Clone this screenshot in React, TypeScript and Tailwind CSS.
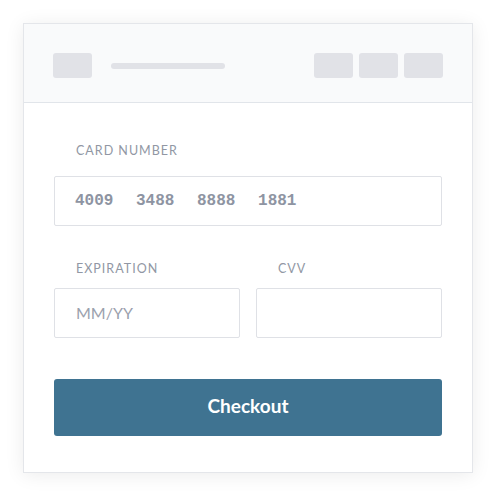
const font = { fontFamily: "Lato, 'Open Sans', sans-serif" };

function Field({ label, children }: { label: string; children?: React.ReactNode }) {
  return (
    <div className="flex flex-col">
      <span className="pl-[22px] text-[12.5px] leading-[16px] tracking-[0.08em] text-[#9197a4]">{label}</span>
      {children}
    </div>
  );
}

export default function App() {
  return (
    <div className="w-[497px] h-[496px] bg-white pl-[23px] pt-[23px]" style={font}>
      <div className="w-[450px] h-[450px] flex flex-col bg-white border border-[#e4e6ea] shadow-[0_2px_18px_rgba(0,0,0,0.08)]">
        {/* window bar */}
        <div className="h-[79px] shrink-0 flex items-center justify-between px-[29px] pt-[5px] bg-[#f9fafb] border-b border-[#e1e5ea]">
          <div className="flex items-center gap-[19px]">
            <div className="w-[39px] h-[25px] rounded-[3px] bg-[#e1e2e7]" />
            <div className="w-[114px] h-[6px] rounded-full bg-[#e1e2e7]" />
          </div>
          <div className="flex gap-[6px]">
            <div className="w-[39px] h-[25px] rounded-[3px] bg-[#e1e2e7]" />
            <div className="w-[39px] h-[25px] rounded-[3px] bg-[#e1e2e7]" />
            <div className="w-[39px] h-[25px] rounded-[3px] bg-[#e1e2e7]" />
          </div>
        </div>

        <div className="flex flex-col px-[30px] pt-[40px]">
          <Field label="CARD NUMBER">
            <div className="mt-[17px] h-[50px] flex items-center pl-[20px] border border-[#dfe1e6] rounded-[2px]">
              <span className="font-['Liberation_Mono',monospace] font-bold text-[16px] text-[#8e94a2] [word-spacing:13px]">
                4009 3488 8888 1881
              </span>
            </div>
          </Field>

          <div className="mt-[35px] grid grid-cols-2 gap-[16px]">
            <Field label="EXPIRATION">
              <div className="mt-[11px] h-[50px] flex items-center pl-[21px] border border-[#dfe1e6] rounded-[2px]">
                <span className="text-[16px] text-[#9ba1ad]">MM/YY</span>
              </div>
            </Field>
            <Field label="CVV">
              <div className="mt-[11px] h-[50px] border border-[#dfe1e6] rounded-[2px]" />
            </Field>
          </div>

          <button className="mt-[41px] h-[57px] w-full pb-[3px] rounded-[3px] bg-[#3f7391] text-white text-[19px] font-bold">
            Checkout
          </button>
        </div>
      </div>
    </div>
  );
}
